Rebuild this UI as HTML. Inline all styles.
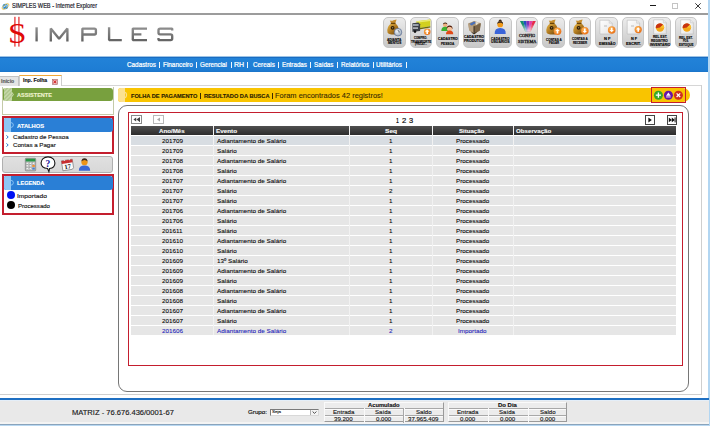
<!DOCTYPE html>
<html><head><meta charset="utf-8">
<style>
*{margin:0;padding:0;box-sizing:border-box}
html,body{width:710px;height:426px;overflow:hidden;background:#fff;font-family:"Liberation Sans",sans-serif;position:relative}
.a{position:absolute}
.t{position:absolute;white-space:nowrap;line-height:1}
.btn{position:absolute;top:17px;width:22.5px;height:30.6px;border-radius:5px;border:1px solid #c6c6c6;background:linear-gradient(#ececec,#dadada 50%,#c8c8c8)}
svg{position:absolute;overflow:visible}
</style></head><body>


<svg style="left:1px;top:1.5px" width="9" height="9" viewBox="0 0 11 11">
 <circle cx="5.3" cy="5.6" r="3.4" fill="#2b8ad6"/>
 <path d="M2.6 6.4 Q5.3 3.6 8.6 5" stroke="#d8ecfa" stroke-width="1.1" fill="none"/>
 <ellipse cx="5.5" cy="5.5" rx="5" ry="2.2" transform="rotate(-38 5.5 5.5)" fill="none" stroke="#e8c040" stroke-width="0.9"/>
</svg>

<div class="t" style="left:11.75px;top:2.87px;font-size:7.12px;font-weight:normal;color:#1b1b2b;font-family:'Liberation Sans',sans-serif;transform:scaleX(0.788);transform-origin:0 0;-webkit-text-stroke:0.2px #1b1b2b;">SIMPLES WEB - Internet Explorer</div>

<div class="a" style="left:650px;top:5px;width:6px;height:1px;background:#1a1a1a"></div>
<div class="a" style="left:672px;top:3px;width:6px;height:6px;border:1px solid #c4c4c4"></div>
<svg style="left:695px;top:3px" width="6" height="6" viewBox="0 0 6 6"><path d="M0.3 0.3L5.7 5.7M5.7 0.3L0.3 5.7" stroke="#222" stroke-width="0.9"/></svg>
<div class="a" style="left:0;top:13px;width:708px;height:2px;background:#9c9c9c"></div>
<div class="a" style="left:708px;top:0;width:2px;height:426px;background:#b2d6f2"></div>


<svg style="left:0;top:14px" width="180" height="40" viewBox="0 14 180 40">
 <defs><linearGradient id="lg" gradientUnits="userSpaceOnUse" x1="0" y1="27" x2="0" y2="42"><stop offset="0" stop-color="#909090"/><stop offset="1" stop-color="#606060"/></linearGradient></defs>
 <g fill="none" stroke="url(#lg)" stroke-width="2.35" stroke-miterlimit="1.3">
  <path d="M36.6 27.3V41.4"/>
  <path d="M50.8 41.4V28.6L59.1 38.8L67.4 28.6V41.4"/>
  <path d="M82.4 41.4V28.6H94.4Q95.9 28.6 95.9 30.1V33Q95.9 34.5 94.4 34.5H82.4"/>
  <path d="M109.1 27.3V40.1H121.8"/>
  <path d="M147 28.6H132.8V40.1H147M132.8 34.3H141.4"/>
  <path d="M172.2 30.6V28.6H160.1Q158.5 28.6 158.5 30.2V32.7Q158.5 34.3 160.1 34.3H170.6Q172.2 34.3 172.2 35.9V38.5Q172.2 40.1 170.6 40.1H158.5V38"/>
 </g>
 <g fill="#e8484a">
  <rect x="14.2" y="16.8" width="1.4" height="29.8"/>
  <rect x="18.2" y="16.8" width="1.4" height="29.8"/>
 </g>
</svg>

<div class="t" style="left:7.84px;top:17.63px;font-size:30.29px;font-weight:normal;color:#e00808;font-family:'Liberation Serif',serif;transform:scaleX(1.098);transform-origin:0 0;">S</div>
<div class="btn" style="left:383.0px"></div>
<svg style="left:383.0px;top:17px" width="23" height="31" viewBox="0 0 23 31"><defs>
<linearGradient id="gbag" x1="0" y1="0" x2="1" y2="1"><stop offset="0" stop-color="#e8b848"/><stop offset="0.5" stop-color="#b07a20"/><stop offset="1" stop-color="#60400c"/></linearGradient>
<radialGradient id="gor" cx="0.4" cy="0.35" r="0.7"><stop offset="0" stop-color="#ffc060"/><stop offset="1" stop-color="#e86a10"/></radialGradient>
<radialGradient id="gsil" cx="0.4" cy="0.35" r="0.7"><stop offset="0" stop-color="#f4f8fc"/><stop offset="1" stop-color="#98a8b8"/></radialGradient>
<linearGradient id="gfan" x1="0" y1="0" x2="0" y2="1"><stop offset="0.3" stop-color="#fff" stop-opacity="0"/><stop offset="1" stop-color="#fff" stop-opacity="0.7"/></linearGradient>
<linearGradient id="gdoc" x1="0" y1="0" x2="1" y2="1"><stop offset="0" stop-color="#ffffff"/><stop offset="1" stop-color="#e4e4e4"/></linearGradient>
</defs><g transform="translate(0 0)"><path d="M8.2 6.3 Q3.2 9.8 4.6 15.6 Q5.6 17.6 10.2 17.6 Q14.8 17.6 15.6 15.4 Q16.6 9.6 12.2 6.3 Z" fill="url(#gbag)"/><path d="M8.2 6.6 L6.8 3.4 Q9 4.4 10.4 3.2 L13.6 2.6 L12.2 6.6Z" fill="#c89030"/><rect x="7.8" y="5.8" width="4.6" height="1.2" fill="#6a4408"/><circle cx="9.6" cy="10.8" r="1.9" fill="#2a1a08"/><circle cx="9.6" cy="10.8" r="0.8" fill="#a08040"/></g><circle cx="15" cy="15.2" r="3.8" fill="url(#gsil)" stroke="#5a6c90" stroke-width="0.7"/><path d="M14.6 13.3 Q16.6 13.6 16.2 15.6" stroke="#345" stroke-width="0.7" fill="none"/></svg>
<div class="t" style="left:387.42px;top:38.64px;font-size:3.49px;font-weight:bold;color:#000;font-family:'Liberation Sans',sans-serif;transform:scaleX(0.936);transform-origin:0 0;-webkit-text-stroke:0.12px #000;">ADIANTA</div>
<div class="t" style="left:387.70px;top:41.94px;font-size:3.49px;font-weight:bold;color:#000;font-family:'Liberation Sans',sans-serif;transform:scaleX(0.902);transform-origin:0 0;-webkit-text-stroke:0.12px #000;">MENTOS</div>
<div class="btn" style="left:409.5px"></div>
<svg style="left:409.5px;top:17px" width="23" height="31" viewBox="0 0 23 31"><path d="M6.5 4.2 L20.3 2.5 V9.2 L6.5 11.6Z" fill="#d2d020"/><path d="M6.5 4.2 L20.3 2.5 L20.3 4 L6.5 5.8Z" fill="#eaea70"/><path d="M6.5 11.6 L20.3 9.2 V10.6 L6.5 13Z" fill="#6a6a10"/><path d="M2.4 6.2 L8.5 5.6 L10.1 7.2 V14 L2.4 14.8Z" fill="#3c4048"/><path d="M3 7 H8.6 V9 H3Z" fill="#9aa2ac"/><rect x="3" y="10.4" width="5" height="1.4" fill="#c8ccd2"/><circle cx="5" cy="14.6" r="1.3" fill="#111"/><circle cx="17.2" cy="14.8" r="3.3" fill="url(#gor)"/><path d="M17.2 12.5 L19.4 14.700000000000001 H18.0 V17.0 H16.4 V14.700000000000001 H15.0Z" fill="#fff"/></svg>
<div class="t" style="left:413.79px;top:37.24px;font-size:3.49px;font-weight:bold;color:#000;font-family:'Liberation Sans',sans-serif;transform:scaleX(0.785);transform-origin:0 0;-webkit-text-stroke:0.12px #000;">COMPRO.</div>
<div class="t" style="left:410.87px;top:40.54px;font-size:3.49px;font-weight:bold;color:#000;font-family:'Liberation Sans',sans-serif;transform:scaleX(0.842);transform-origin:0 0;-webkit-text-stroke:0.12px #000;">TRANSPORTE</div>
<div class="t" style="left:414.88px;top:43.44px;font-size:3.49px;font-weight:bold;color:#000;font-family:'Liberation Sans',sans-serif;transform:scaleX(0.678);transform-origin:0 0;-webkit-text-stroke:0.12px #000;">(PROJET...</div>
<div class="btn" style="left:436.0px"></div>
<svg style="left:436.0px;top:17px" width="23" height="31" viewBox="0 0 23 31"><circle cx="9.2" cy="7.9" r="2.2" fill="#f0b080"/><path d="M6.9 7.6 Q7 5.4 9.2 5.4 Q11.4 5.4 11.5 7.4 Q10.4 6.4 9.2 6.5 Q8 6.5 6.9 7.6Z" fill="#3a2010"/><path d="M5.3 14 Q5.3 9.8 9.2 9.8 Q13 9.8 13 14Z" fill="#3cb030"/><circle cx="13.6" cy="11.4" r="2.7" fill="#f4c098"/><path d="M10.7 12.2 Q10.4 8.4 13.6 8.4 Q16.8 8.4 16.5 12.2 Q15.8 9.8 13.6 9.8 Q11.4 9.8 10.7 12.2Z" fill="#4a1a0a"/><path d="M10 17.2 Q10 13.6 13.6 13.6 Q17.2 13.6 17.2 17.2Z" fill="#e04a18"/></svg>
<div class="t" style="left:438.06px;top:37.84px;font-size:3.49px;font-weight:bold;color:#000;font-family:'Liberation Sans',sans-serif;transform:scaleX(1.005);transform-origin:0 0;-webkit-text-stroke:0.12px #000;">CADASTRO</div>
<div class="t" style="left:441.29px;top:42.64px;font-size:3.49px;font-weight:bold;color:#000;font-family:'Liberation Sans',sans-serif;transform:scaleX(0.914);transform-origin:0 0;-webkit-text-stroke:0.12px #000;">PESSOA</div>
<div class="btn" style="left:462.5px"></div>
<svg style="left:462.5px;top:17px" width="23" height="31" viewBox="0 0 23 31"><path d="M5.2 6.4 L11.2 4 L17.8 6.2 L16.8 13.4 L11 17 L6.2 13.2Z" fill="#a8906c"/><path d="M11 9.2 L17.8 6.2 L16.8 13.4 L11 17Z" fill="#7a6448"/><path d="M5.2 6.4 L11 9.2 V17 L6.2 13.2Z" fill="#b8a080"/><path d="M6.5 7 L11 4.6 L13.5 5.8 L8.6 8.6Z" fill="#4a70b8"/><path d="M12.5 5 L16.5 5.4 L12.8 8.4Z" fill="#e8e0d0"/><path d="M11 9.2 L11 17" stroke="#2a2418" stroke-width="0.9"/><path d="M8.5 15.2 L11 17 L13.5 15.2" stroke="#2a2418" stroke-width="0.8" fill="none"/></svg>
<div class="t" style="left:463.86px;top:35.64px;font-size:3.49px;font-weight:bold;color:#000;font-family:'Liberation Sans',sans-serif;transform:scaleX(1.010);transform-origin:0 0;-webkit-text-stroke:0.12px #000;">CADASTRO</div>
<div class="t" style="left:463.77px;top:40.44px;font-size:3.49px;font-weight:bold;color:#000;font-family:'Liberation Sans',sans-serif;transform:scaleX(1.018);transform-origin:0 0;-webkit-text-stroke:0.12px #000;">PRODUTOS</div>
<div class="btn" style="left:489.0px"></div>
<svg style="left:489.0px;top:17px" width="23" height="31" viewBox="0 0 23 31"><circle cx="11.2" cy="4.2" r="1.6" fill="#3a2a20"/><circle cx="11.2" cy="7.4" r="2.9" fill="#f09a1a"/><path d="M8.3 7 Q8.2 4.6 11.2 4.6 Q14.2 4.6 14.1 7 Q13 5.8 11.2 5.8 Q9.4 5.8 8.3 7Z" fill="#3a2a20"/><path d="M5.7 17 Q5.2 11 11.2 11 Q17.2 11 16.7 17Z" fill="#3a64d8"/></svg>
<div class="t" style="left:491.47px;top:37.84px;font-size:3.49px;font-weight:bold;color:#000;font-family:'Liberation Sans',sans-serif;transform:scaleX(0.933);transform-origin:0 0;-webkit-text-stroke:0.12px #000;">CADASTRO</div>
<div class="t" style="left:491.39px;top:41.34px;font-size:3.49px;font-weight:bold;color:#000;font-family:'Liberation Sans',sans-serif;transform:scaleX(1.006);transform-origin:0 0;-webkit-text-stroke:0.12px #000;">USUARIOS</div>
<div class="btn" style="left:515.5px"></div>
<svg style="left:515.5px;top:17px" width="23" height="31" viewBox="0 0 23 31"><path d="M4 4 L19.8 4 L14.7 14.2 L9.1 14.2Z" fill="#ccc"/><path d="M4 4 L7.2 4 L10.2 14.2 L9.1 14.2Z" fill="#10906a"/><path d="M7.2 4 L10.3 4 L11.3 14.2 L10.2 14.2Z" fill="#2050c0"/><path d="M10.3 4 L13.5 4 L12.4 14.2 L11.3 14.2Z" fill="#8030b8"/><path d="M13.5 4 L16.7 4 L13.6 14.2 L12.4 14.2Z" fill="#e040a8"/><path d="M16.7 4 L19.8 4 L14.7 14.2 L13.6 14.2Z" fill="#e82848"/><path d="M4 4 L19.8 4 L14.7 14.2 L9.1 14.2Z" fill="url(#gfan)"/></svg>
<div class="t" style="left:519.02px;top:34.11px;font-size:4.47px;font-weight:normal;color:#1a1a1a;font-family:'Liberation Serif',serif;transform:scaleX(0.981);transform-origin:0 0;-webkit-text-stroke:0.3px #1a1a1a;">CONFIG</div>
<div class="t" style="left:517.62px;top:39.91px;font-size:4.47px;font-weight:normal;color:#1a1a1a;font-family:'Liberation Serif',serif;transform:scaleX(0.968);transform-origin:0 0;-webkit-text-stroke:0.3px #1a1a1a;">SISTEMA</div>
<div class="btn" style="left:542.0px"></div>
<svg style="left:542.0px;top:17px" width="23" height="31" viewBox="0 0 23 31"><g transform="translate(0 0)"><path d="M8.2 6.3 Q3.2 9.8 4.6 15.6 Q5.6 17.6 10.2 17.6 Q14.8 17.6 15.6 15.4 Q16.6 9.6 12.2 6.3 Z" fill="url(#gbag)"/><path d="M8.2 6.6 L6.8 3.4 Q9 4.4 10.4 3.2 L13.6 2.6 L12.2 6.6Z" fill="#c89030"/><rect x="7.8" y="5.8" width="4.6" height="1.2" fill="#6a4408"/><circle cx="9.6" cy="10.8" r="1.9" fill="#2a1a08"/><circle cx="9.6" cy="10.8" r="0.8" fill="#a08040"/></g><circle cx="15.5" cy="14.2" r="3.8" fill="url(#gor)"/><path d="M15.5 11.899999999999999 L17.7 14.1 H16.3 V16.4 H14.7 V14.1 H13.3Z" fill="#fff"/></svg>
<div class="t" style="left:545.88px;top:38.64px;font-size:3.49px;font-weight:bold;color:#000;font-family:'Liberation Sans',sans-serif;transform:scaleX(0.886);transform-origin:0 0;-webkit-text-stroke:0.12px #000;">CONTAS A</div>
<div class="t" style="left:548.91px;top:41.84px;font-size:3.49px;font-weight:bold;color:#000;font-family:'Liberation Sans',sans-serif;transform:scaleX(0.822);transform-origin:0 0;-webkit-text-stroke:0.12px #000;">PAGAR</div>
<div class="btn" style="left:568.5px"></div>
<svg style="left:568.5px;top:17px" width="23" height="31" viewBox="0 0 23 31"><g transform="translate(0 0)"><path d="M8.2 6.3 Q3.2 9.8 4.6 15.6 Q5.6 17.6 10.2 17.6 Q14.8 17.6 15.6 15.4 Q16.6 9.6 12.2 6.3 Z" fill="url(#gbag)"/><path d="M8.2 6.6 L6.8 3.4 Q9 4.4 10.4 3.2 L13.6 2.6 L12.2 6.6Z" fill="#c89030"/><rect x="7.8" y="5.8" width="4.6" height="1.2" fill="#6a4408"/><circle cx="9.6" cy="10.8" r="1.9" fill="#2a1a08"/><circle cx="9.6" cy="10.8" r="0.8" fill="#a08040"/></g><circle cx="15.8" cy="13.8" r="3.8" fill="url(#gor)"/><path d="M15.8 16.1 L18.0 13.9 H16.6 V11.600000000000001 H15.0 V13.9 H13.600000000000001Z" fill="#fff"/></svg>
<div class="t" style="left:572.18px;top:37.84px;font-size:3.49px;font-weight:bold;color:#000;font-family:'Liberation Sans',sans-serif;transform:scaleX(0.886);transform-origin:0 0;-webkit-text-stroke:0.12px #000;">CONTAS A</div>
<div class="t" style="left:573.01px;top:41.84px;font-size:3.49px;font-weight:bold;color:#000;font-family:'Liberation Sans',sans-serif;transform:scaleX(0.823);transform-origin:0 0;-webkit-text-stroke:0.12px #000;">RECEBER</div>
<div class="btn" style="left:595.0px"></div>
<svg style="left:595.0px;top:17px" width="23" height="31" viewBox="0 0 23 31"><path d="M4.9 3.2 H14.2 L17.2 6.2 V17 H4.9Z" fill="url(#gdoc)" stroke="#b8b8b8" stroke-width="0.6"/><path d="M14.2 3.2 V6.2 H17.2" fill="#e8e8e8" stroke="#c0c0c0" stroke-width="0.5"/><path d="M9 9 H12" stroke="#999" stroke-width="0.6"/><circle cx="16.7" cy="13" r="3.8" fill="url(#gor)"/><path d="M16.7 15.3 L18.9 13.1 H17.5 V10.8 H15.899999999999999 V13.1 H14.5Z" fill="#fff"/></svg>
<div class="t" style="left:603.53px;top:37.84px;font-size:3.49px;font-weight:bold;color:#000;font-family:'Liberation Sans',sans-serif;transform:scaleX(1.176);transform-origin:0 0;-webkit-text-stroke:0.12px #000;">N F</div>
<div class="t" style="left:598.67px;top:42.64px;font-size:3.49px;font-weight:bold;color:#000;font-family:'Liberation Sans',sans-serif;transform:scaleX(1.024);transform-origin:0 0;-webkit-text-stroke:0.12px #000;">EMISSÃO</div>
<div class="btn" style="left:621.5px"></div>
<svg style="left:621.5px;top:17px" width="23" height="31" viewBox="0 0 23 31"><path d="M5.2 3.2 H14.600000000000001 L17.6 6.2 V17 H5.2Z" fill="url(#gdoc)" stroke="#b8b8b8" stroke-width="0.6"/><path d="M14.600000000000001 3.2 V6.2 H17.6" fill="#e8e8e8" stroke="#c0c0c0" stroke-width="0.5"/><path d="M9 9 H12" stroke="#999" stroke-width="0.6"/><circle cx="16.2" cy="12.6" r="3.6" fill="url(#gor)"/><path d="M16.2 10.3 L18.4 12.5 H17.0 V14.8 H15.399999999999999 V12.5 H14.0Z" fill="#fff"/></svg>
<div class="t" style="left:630.75px;top:37.84px;font-size:3.49px;font-weight:bold;color:#000;font-family:'Liberation Sans',sans-serif;transform:scaleX(1.100);transform-origin:0 0;-webkit-text-stroke:0.12px #000;">N F</div>
<div class="t" style="left:626.25px;top:42.64px;font-size:3.49px;font-weight:bold;color:#000;font-family:'Liberation Sans',sans-serif;transform:scaleX(1.107);transform-origin:0 0;-webkit-text-stroke:0.12px #000;">ESCRIT.</div>
<div class="btn" style="left:648.0px"></div>
<svg style="left:648.0px;top:17px" width="23" height="31" viewBox="0 0 23 31"><path d="M5.7 2.8 H15.3 L18.3 5.8 V17 H5.7Z" fill="url(#gdoc)" stroke="#b8b8b8" stroke-width="0.6"/><path d="M15.3 2.8 V5.8 H18.3" fill="#e8e8e8" stroke="#c0c0c0" stroke-width="0.5"/><circle cx="12" cy="10.6" r="4.2" fill="#f4a818"/><path d="M12 10.6 L7.8 11.2 A4.2 4.2 0 0 1 15.15 7.827999999999999Z" fill="#c83410"/><path d="M12 10.6 L15.15 7.827999999999999 A4.2 4.2 0 0 1 16.2 10.9Z" fill="#f8c030"/></svg>
<div class="t" style="left:652.69px;top:36.04px;font-size:3.49px;font-weight:bold;color:#000;font-family:'Liberation Sans',sans-serif;transform:scaleX(0.932);transform-origin:0 0;-webkit-text-stroke:0.12px #000;">REL EST.</div>
<div class="t" style="left:651.39px;top:40.04px;font-size:3.49px;font-weight:bold;color:#000;font-family:'Liberation Sans',sans-serif;transform:scaleX(0.918);transform-origin:0 0;-webkit-text-stroke:0.12px #000;">REGISTRO</div>
<div class="t" style="left:649.59px;top:43.64px;font-size:3.49px;font-weight:bold;color:#000;font-family:'Liberation Sans',sans-serif;transform:scaleX(0.945);transform-origin:0 0;-webkit-text-stroke:0.12px #000;">INVENTÁRIO</div>
<div class="btn" style="left:674.5px"></div>
<svg style="left:674.5px;top:17px" width="23" height="31" viewBox="0 0 23 31"><path d="M5.7 2.8 H15.3 L18.3 5.8 V17 H5.7Z" fill="url(#gdoc)" stroke="#b8b8b8" stroke-width="0.6"/><path d="M15.3 2.8 V5.8 H18.3" fill="#e8e8e8" stroke="#c0c0c0" stroke-width="0.5"/><circle cx="11.9" cy="10.6" r="4.2" fill="#f4a818"/><path d="M11.9 10.6 L7.7 11.2 A4.2 4.2 0 0 1 15.05 7.827999999999999Z" fill="#c83410"/><path d="M11.9 10.6 L15.05 7.827999999999999 A4.2 4.2 0 0 1 16.1 10.9Z" fill="#f8c030"/></svg>
<div class="t" style="left:678.99px;top:36.94px;font-size:3.49px;font-weight:bold;color:#000;font-family:'Liberation Sans',sans-serif;transform:scaleX(0.905);transform-origin:0 0;-webkit-text-stroke:0.12px #000;">REL EST.</div>
<div class="t" style="left:683.04px;top:40.44px;font-size:3.49px;font-weight:bold;color:#000;font-family:'Liberation Sans',sans-serif;transform:scaleX(0.686);transform-origin:0 0;-webkit-text-stroke:0.12px #000;">POS.</div>
<div class="t" style="left:678.61px;top:44.04px;font-size:3.49px;font-weight:bold;color:#000;font-family:'Liberation Sans',sans-serif;transform:scaleX(0.853);transform-origin:0 0;-webkit-text-stroke:0.12px #000;">ESTOQUE</div>

<div class="a" style="left:0;top:56px;width:708px;height:1px;background:#9cc4e6"></div>
<div class="a" style="left:0;top:57px;width:708px;height:15px;background:linear-gradient(#1a6cc2 0,#1a6cc2 1px,#2282d8 1px,#1e7dd4 13px,#1a74c8 15px)"></div>

<div class="t" style="left:126.58px;top:62.32px;font-size:6.70px;font-weight:normal;color:#fff;font-family:'Liberation Sans',sans-serif;transform:scaleX(0.950);transform-origin:0 0;-webkit-text-stroke:0.22px #fff;">Cadastros</div>
<div class="a" style="left:159.0px;top:62.2px;width:0.9px;height:6px;background:#f0f6fc"></div>
<div class="t" style="left:163.49px;top:62.32px;font-size:6.70px;font-weight:normal;color:#fff;font-family:'Liberation Sans',sans-serif;transform:scaleX(0.954);transform-origin:0 0;-webkit-text-stroke:0.22px #fff;">Financeiro</div>
<div class="a" style="left:196.0px;top:62.2px;width:0.9px;height:6px;background:#f0f6fc"></div>
<div class="t" style="left:200.38px;top:62.32px;font-size:6.70px;font-weight:normal;color:#fff;font-family:'Liberation Sans',sans-serif;transform:scaleX(0.942);transform-origin:0 0;-webkit-text-stroke:0.22px #fff;">Gerencial</div>
<div class="a" style="left:231.3px;top:62.2px;width:0.9px;height:6px;background:#f0f6fc"></div>
<div class="t" style="left:234.24px;top:62.32px;font-size:6.70px;font-weight:normal;color:#fff;font-family:'Liberation Sans',sans-serif;transform:scaleX(1.049);transform-origin:0 0;-webkit-text-stroke:0.22px #fff;">RH</div>
<div class="a" style="left:247.1px;top:62.2px;width:0.9px;height:6px;background:#f0f6fc"></div>
<div class="t" style="left:252.68px;top:62.32px;font-size:6.70px;font-weight:normal;color:#fff;font-family:'Liberation Sans',sans-serif;transform:scaleX(0.946);transform-origin:0 0;-webkit-text-stroke:0.22px #fff;">Cereais</div>
<div class="a" style="left:277.8px;top:62.2px;width:0.9px;height:6px;background:#f0f6fc"></div>
<div class="t" style="left:281.70px;top:62.32px;font-size:6.70px;font-weight:normal;color:#fff;font-family:'Liberation Sans',sans-serif;transform:scaleX(0.932);transform-origin:0 0;-webkit-text-stroke:0.22px #fff;">Entradas</div>
<div class="a" style="left:310.3px;top:62.2px;width:0.9px;height:6px;background:#f0f6fc"></div>
<div class="t" style="left:313.62px;top:62.32px;font-size:6.70px;font-weight:normal;color:#fff;font-family:'Liberation Sans',sans-serif;transform:scaleX(0.934);transform-origin:0 0;-webkit-text-stroke:0.22px #fff;">Saídas</div>
<div class="a" style="left:337.4px;top:62.2px;width:0.9px;height:6px;background:#f0f6fc"></div>
<div class="t" style="left:340.80px;top:62.32px;font-size:6.70px;font-weight:normal;color:#fff;font-family:'Liberation Sans',sans-serif;transform:scaleX(0.935);transform-origin:0 0;-webkit-text-stroke:0.22px #fff;">Relatórios</div>
<div class="a" style="left:372.6px;top:62.2px;width:0.9px;height:6px;background:#f0f6fc"></div>
<div class="t" style="left:376.33px;top:62.32px;font-size:6.70px;font-weight:normal;color:#fff;font-family:'Liberation Sans',sans-serif;transform:scaleX(0.940);transform-origin:0 0;-webkit-text-stroke:0.22px #fff;">Utilitários</div>
<div class="a" style="left:406.4px;top:62.2px;width:0.9px;height:6px;background:#f0f6fc"></div>

<div class="a" style="left:0;top:85px;width:702px;height:1px;background:#d6d6d6"></div>
<div class="a" style="left:0;top:76px;width:19px;height:10px;background:#e4e4e4;border:1px solid #c2c2c2;border-left:none;border-bottom:none"></div>
<div class="a" style="left:19px;top:75px;width:43px;height:11px;background:#fff;border:1px solid #cdcdcd;border-bottom:none;border-top:1px solid #f0a838"></div>
<svg style="left:52.3px;top:78.6px" width="6" height="6" viewBox="0 0 6 6"><rect x="0.3" y="0.3" width="5.2" height="5.2" fill="#f4d4d4" stroke="#a06060" stroke-width="0.6"/><path d="M1.4 1.4L4.4 4.4M4.4 1.4L1.4 4.4" stroke="#d83838" stroke-width="1.1"/></svg>

<div class="t" style="left:1.47px;top:78.70px;font-size:5.31px;font-weight:bold;color:#5a5a5a;font-family:'Liberation Sans',sans-serif;transform:scaleX(0.948);transform-origin:0 0;-webkit-text-stroke:0.15px #5a5a5a;">Início</div>
<div class="t" style="left:22.67px;top:77.60px;font-size:5.31px;font-weight:bold;color:#111;font-family:'Liberation Sans',sans-serif;transform:scaleX(0.965);transform-origin:0 0;-webkit-text-stroke:0.15px #111;">Inp. Folha</div>
<div class="a" style="left:2px;top:87px;width:112px;height:28px;border:1px solid #c4caa8;border-top:none;background:#fff"></div>
<div class="a" style="left:3px;top:87.5px;width:110px;height:13px;background:#78a03e;border-radius:2px 3px 3px 2px"></div>
<div class="a" style="left:4px;top:88px;width:8px;height:12.5px;background:repeating-linear-gradient(135deg,#c4d6a6 0 1.5px,#b2c890 1.5px 3px)"></div>
<svg style="left:11px;top:88px" width="4" height="13" viewBox="0 0 4 13"><path d="M0.5 4 L2.3 6.5 L0.5 9" stroke="#c4d6a6" stroke-width="1.1" fill="none"/></svg>
<div class="t" style="left:16.76px;top:93.00px;font-size:5.31px;font-weight:bold;color:#f0f4d0;font-family:'Liberation Sans',sans-serif;transform:scaleX(1.052);transform-origin:0 0;-webkit-text-stroke:0.12px #f0f4d0;">ASSISTENTE</div>
<div class="a" style="left:2px;top:116px;width:112px;height:37.5px;border:2px solid #c41e2e;background:#fff"></div>
<div class="a" style="left:4px;top:118px;width:109px;height:14px;background:#2a7fd6;border-radius:2px 3px 3px 2px"></div><div class="a" style="left:4px;top:118px;width:7px;height:14px;background:#8ec6f4;border-radius:2px 0 0 2px"></div><svg style="left:10.3px;top:118px" width="4" height="14" viewBox="0 0 4 14"><path d="M0 4.4 Q3.4 4.4 3.4 7.0 Q3.4 9.6 0 9.6" stroke="#8ec6f4" stroke-width="0.9" fill="none"/></svg><div class="t" style="left:16.85px;top:124.12px;font-size:5.17px;font-weight:bold;color:#fff;font-family:'Liberation Sans',sans-serif;transform:scaleX(1.126);transform-origin:0 0;-webkit-text-stroke:0.12px #fff;">ATALHOS</div>
<svg style="left:6px;top:135.4px" width="3" height="4" viewBox="0 0 3 4"><path d="M0.4 0.4 L2.2 2 L0.4 3.6" stroke="#1f6fc8" stroke-width="0.9" fill="none"/></svg>
<div class="t" style="left:13.49px;top:134.97px;font-size:5.59px;font-weight:normal;color:#1a1a1a;font-family:'Liberation Sans',sans-serif;transform:scaleX(1.099);transform-origin:0 0;-webkit-text-stroke:0.15px #1a1a1a;">Cadastro de Pessoa</div>
<svg style="left:6px;top:143.3px" width="3" height="4" viewBox="0 0 3 4"><path d="M0.4 0.4 L2.2 2 L0.4 3.6" stroke="#1f6fc8" stroke-width="0.9" fill="none"/></svg>
<div class="t" style="left:13.49px;top:142.87px;font-size:5.59px;font-weight:normal;color:#1a1a1a;font-family:'Liberation Sans',sans-serif;transform:scaleX(1.103);transform-origin:0 0;-webkit-text-stroke:0.15px #1a1a1a;">Contas a Pagar</div>
<div class="a" style="left:2px;top:156px;width:111px;height:16.5px;background:linear-gradient(#e0e0e0,#d8d8d8);border:1px solid #b0b0b0;border-radius:3px"></div>
<svg style="left:25px;top:157.5px" width="11" height="13" viewBox="0 0 11 13">
 <rect x="0.3" y="0.3" width="10.4" height="12.6" rx="0.8" fill="#bfc4c4" stroke="#707070" stroke-width="0.6"/>
 <rect x="0.7" y="0.7" width="9.6" height="2.8" fill="#2a9648"/>
 <g fill="#f2f2f2" stroke="#8a8a8a" stroke-width="0.35"><rect x="1.1" y="4.2" width="2.5" height="2"/><rect x="4.2" y="4.2" width="2.5" height="2"/><rect x="1.1" y="6.9" width="2.5" height="2"/><rect x="4.2" y="6.9" width="2.5" height="2"/><rect x="1.1" y="9.6" width="2.5" height="2"/><rect x="4.2" y="9.6" width="2.5" height="2"/><rect x="7.3" y="4.2" width="2.5" height="2"/></g>
 <rect x="7.3" y="6.9" width="2.5" height="2" fill="#f09030"/><rect x="7.3" y="9.6" width="2.5" height="2" fill="#4a80d0"/>
</svg>
<svg style="left:40px;top:156px" width="16" height="16" viewBox="0 0 16 16">
 <path d="M8 0.9 C12 0.9 14.9 3.4 14.9 6.9 C14.9 10 12.6 12.1 9.6 12.5 L8.9 15.6 L7.6 12.5 C3.6 12.2 1.1 10 1.1 6.9 C1.1 3.4 4 0.9 8 0.9Z" fill="#fff" stroke="#151515" stroke-width="1.1"/>
 <text x="7.9" y="10.6" text-anchor="middle" font-family="Liberation Serif" font-weight="bold" font-size="9.5" fill="#10109a">?</text>
</svg>
<svg style="left:60.5px;top:158px" width="13" height="13" viewBox="0 0 13 13">
 <g transform="rotate(-9 6.5 6.5)">
 <path d="M1 2 H12 V10.5 L10.5 12 H1Z" fill="#fafafa" stroke="#6a6a6a" stroke-width="0.6"/>
 <rect x="1" y="2" width="11" height="3" fill="#c83030"/>
 <circle cx="4" cy="2" r="0.6" fill="#eee"/><circle cx="9" cy="2" r="0.6" fill="#eee"/>
 <text x="6.4" y="10.8" text-anchor="middle" font-family="Liberation Serif" font-weight="bold" font-size="6.5" fill="#111">17</text>
 </g>
</svg>
<svg style="left:77.5px;top:157px" width="13" height="14" viewBox="0 0 13 14">
 <circle cx="6.5" cy="5.2" r="3.1" fill="#ee9418"/>
 <path d="M3.4 4.6 Q3.6 1.2 6.5 1.2 Q9.4 1.2 9.6 4.6 Q8.5 3 6.5 3 Q4.5 3 3.4 4.6Z" fill="#3c2a1c"/>
 <path d="M0.8 13.8 Q0.8 8.6 6.5 8.6 Q12.2 8.6 12.2 13.8Z" fill="#3a68d6"/>
</svg>

<div class="a" style="left:2px;top:174.3px;width:112px;height:41px;border:2px solid #c41e2e;background:#fff"></div>
<div class="a" style="left:4px;top:176px;width:109px;height:13.5px;background:#2a7fd6;border-radius:2px 3px 3px 2px"></div><div class="a" style="left:4px;top:176px;width:7px;height:13.5px;background:#8ec6f4;border-radius:2px 0 0 2px"></div><svg style="left:10.3px;top:176px" width="4" height="13.5" viewBox="0 0 4 13.5"><path d="M0 4.15 Q3.4 4.15 3.4 6.75 Q3.4 9.35 0 9.35" stroke="#8ec6f4" stroke-width="0.9" fill="none"/></svg><div class="t" style="left:16.54px;top:180.92px;font-size:5.17px;font-weight:bold;color:#fff;font-family:'Liberation Sans',sans-serif;transform:scaleX(1.082);transform-origin:0 0;-webkit-text-stroke:0.12px #fff;">LEGENDA</div>
<div class="a" style="left:6.6px;top:190.8px;width:8.6px;height:8.6px;border-radius:50%;background:#0010f4"></div>
<div class="a" style="left:6.6px;top:200.6px;width:8.6px;height:8.6px;border-radius:50%;background:#000"></div>
<div class="t" style="left:17.40px;top:194.07px;font-size:5.59px;font-weight:normal;color:#1a1a1a;font-family:'Liberation Sans',sans-serif;transform:scaleX(1.188);transform-origin:0 0;-webkit-text-stroke:0.15px #1a1a1a;">Importado</div>
<div class="t" style="left:17.51px;top:203.97px;font-size:5.59px;font-weight:normal;color:#1a1a1a;font-family:'Liberation Sans',sans-serif;transform:scaleX(1.086);transform-origin:0 0;-webkit-text-stroke:0.15px #1a1a1a;">Processado</div>

<div class="a" style="left:701px;top:85px;width:1px;height:310px;background:#cfcfcf"></div>
<div class="a" style="left:0;top:394px;width:702px;height:1px;background:#cfcfcf"></div>
<div class="a" style="left:118px;top:88.2px;width:572px;height:13.6px;background:#f9c400;border-radius:3px 7px 7px 3px"></div>
<div class="a" style="left:118px;top:88.2px;width:7px;height:13.6px;background:#fbe190;border-radius:3px 0 0 3px"></div>
<svg style="left:124.5px;top:88px" width="4" height="14" viewBox="0 0 4 14"><path d="M0.3 4.2 Q2.8 7 0.3 9.8" stroke="#fbe190" stroke-width="1.2" fill="none"/></svg>

<div class="t" style="left:130.83px;top:93.64px;font-size:5.03px;font-weight:bold;color:#2a2000;font-family:'Liberation Sans',sans-serif;transform:scaleX(1.125);transform-origin:0 0;-webkit-text-stroke:0.12px #2a2000;">FOLHA DE PAGAMENTO</div>
<div class="a" style="left:200.2px;top:93px;width:0.8px;height:6px;background:#3a2a00"></div>
<div class="t" style="left:203.53px;top:93.64px;font-size:5.03px;font-weight:bold;color:#2a2000;font-family:'Liberation Sans',sans-serif;transform:scaleX(1.126);transform-origin:0 0;-webkit-text-stroke:0.12px #2a2000;">RESULTADO DA BUSCA</div>
<div class="a" style="left:272.2px;top:93px;width:0.8px;height:6px;background:#3a2a00"></div>
<div class="t" style="left:274.80px;top:93.14px;font-size:6.56px;font-weight:normal;color:#3a2c00;font-family:'Liberation Sans',sans-serif;transform:scaleX(1.140);transform-origin:0 0;-webkit-text-stroke:0.1px #3a2c00;">Foram encontrados 42 registros!</div>

<div class="a" style="left:650.7px;top:87.1px;width:35.2px;height:15.7px;border:1.9px solid #c41e2e"></div>
<svg style="left:653px;top:90px" width="31" height="11" viewBox="653 90 31 11">
 <circle cx="658.4" cy="95.2" r="4.5" fill="#38a828"/><path d="M658.4 92.6V97.8M655.8 95.2H661" stroke="#fff" stroke-width="1.3"/>
 <circle cx="668.4" cy="95.2" r="4.5" fill="#6a14a4"/><path d="M668.4 92.6L670.7 95.8H666.1Z" fill="#fff"/><rect x="666.1" y="96.5" width="4.6" height="0.9" fill="#fff"/>
 <circle cx="678.4" cy="95.2" r="4.5" fill="#d03020"/><path d="M676.6 93.4L680.2 97M680.2 93.4L676.6 97" stroke="#fff" stroke-width="1.2"/>
</svg>
<div class="a" style="left:118px;top:105px;width:571px;height:287px;border:1px solid #767676;border-radius:9px"></div>
<div class="a" style="left:128px;top:112.3px;width:555px;height:254px;border:1.7px solid #c41e2e"></div>


<div class="a" style="left:131.1px;top:115.1px;width:10.7px;height:9px;border:1px solid #8a8a8a;background:#fff"></div>
<svg style="left:131px;top:115px" width="11" height="10" viewBox="0 0 11 10"><path d="M2.4 4.6 L5.2 2.6 V6.6Z M5.4 4.6 L8.2 2.6 V6.6Z" fill="#444"/><rect x="8" y="2.4" width="1" height="4.4" fill="#444"/></svg>
<div class="a" style="left:153px;top:115.1px;width:10.8px;height:9px;border:1px solid #b8b8b8;background:#fff"></div>
<svg style="left:153px;top:115px" width="11" height="10" viewBox="0 0 11 10"><path d="M4 4.6 L7 2.6 V6.6Z" fill="#aaa"/></svg>
<div class="a" style="left:645.4px;top:115.1px;width:9.4px;height:9.7px;border:1px solid #444;background:#fff"></div>
<svg style="left:645px;top:115px" width="10" height="10" viewBox="0 0 10 10"><path d="M3.4 2.4 L6.8 4.9 L3.4 7.4Z" fill="#111"/></svg>
<div class="a" style="left:667px;top:115.1px;width:10px;height:9.7px;border:1px solid #444;background:#fff"></div>
<svg style="left:667px;top:115px" width="10" height="10" viewBox="0 0 10 10"><path d="M1.8 2.5 L4.8 4.9 L1.8 7.3Z M4.8 2.5 L7.8 4.9 L4.8 7.3Z" fill="#111"/><rect x="7.6" y="2.4" width="1" height="5" fill="#111"/></svg>

<div class="t" style="left:396.46px;top:118.04px;font-size:6.56px;font-weight:bold;color:#111;font-family:'Liberation Sans',sans-serif;transform:scaleX(0.786);transform-origin:0 0;">1</div>
<div class="t" style="left:401.92px;top:118.04px;font-size:6.56px;font-weight:normal;color:#111;font-family:'Liberation Sans',sans-serif;transform:scaleX(1.172);transform-origin:0 0;-webkit-text-stroke:0.2px #111;">2</div>
<div class="t" style="left:408.50px;top:118.04px;font-size:6.56px;font-weight:normal;color:#111;font-family:'Liberation Sans',sans-serif;transform:scaleX(1.134);transform-origin:0 0;-webkit-text-stroke:0.2px #111;">3</div>
<div class="a" style="left:131.3px;top:125.8px;width:544.7px;height:9.2px;background:linear-gradient(#505050,#2c2c2c)"></div>
<div class="t" style="left:159.05px;top:129.09px;font-size:5.45px;font-weight:bold;color:#fafafa;font-family:'Liberation Sans',sans-serif;transform:scaleX(1.133);transform-origin:0 0;-webkit-text-stroke:0.1px #fafafa;">Ano/Mês</div>
<div class="t" style="left:215.79px;top:129.09px;font-size:5.45px;font-weight:bold;color:#fafafa;font-family:'Liberation Sans',sans-serif;transform:scaleX(1.160);transform-origin:0 0;-webkit-text-stroke:0.1px #fafafa;">Evento</div>
<div class="t" style="left:384.50px;top:129.09px;font-size:5.45px;font-weight:bold;color:#fafafa;font-family:'Liberation Sans',sans-serif;transform:scaleX(1.213);transform-origin:0 0;-webkit-text-stroke:0.1px #fafafa;">Seq</div>
<div class="t" style="left:459.42px;top:129.09px;font-size:5.45px;font-weight:bold;color:#fafafa;font-family:'Liberation Sans',sans-serif;transform:scaleX(1.116);transform-origin:0 0;-webkit-text-stroke:0.1px #fafafa;">Situação</div>
<div class="t" style="left:516.35px;top:129.09px;font-size:5.45px;font-weight:bold;color:#fafafa;font-family:'Liberation Sans',sans-serif;transform:scaleX(1.132);transform-origin:0 0;-webkit-text-stroke:0.1px #fafafa;">Observação</div>
<div class="a" style="left:131.3px;top:135.8px;width:544.7px;height:9.2px;background:#d8dde2"></div>
<div class="t" style="left:161.63px;top:139.25px;font-size:5.73px;font-weight:normal;color:#000;font-family:'Liberation Sans',sans-serif;transform:scaleX(1.105);transform-origin:0 0;-webkit-text-stroke:0.07px #000;">201709</div>
<div class="t" style="left:217.27px;top:139.25px;font-size:5.73px;font-weight:normal;color:#000;font-family:'Liberation Sans',sans-serif;transform:scaleX(1.105);transform-origin:0 0;-webkit-text-stroke:0.07px #000;">Adiantamento de Salário</div>
<div class="t" style="left:389.15px;top:139.25px;font-size:5.73px;font-weight:normal;color:#000;font-family:'Liberation Sans',sans-serif;transform:scaleX(1.105);transform-origin:0 0;-webkit-text-stroke:0.07px #000;">1</div>
<div class="t" style="left:455.57px;top:139.25px;font-size:5.73px;font-weight:normal;color:#000;font-family:'Liberation Sans',sans-serif;transform:scaleX(1.105);transform-origin:0 0;-webkit-text-stroke:0.07px #000;">Processado</div>
<div class="a" style="left:131.3px;top:145.8px;width:544.7px;height:9.2px;background:#e6e6e6"></div>
<div class="t" style="left:161.63px;top:149.25px;font-size:5.73px;font-weight:normal;color:#000;font-family:'Liberation Sans',sans-serif;transform:scaleX(1.105);transform-origin:0 0;-webkit-text-stroke:0.07px #000;">201709</div>
<div class="t" style="left:217.02px;top:149.25px;font-size:5.73px;font-weight:normal;color:#000;font-family:'Liberation Sans',sans-serif;transform:scaleX(1.105);transform-origin:0 0;-webkit-text-stroke:0.07px #000;">Salário</div>
<div class="t" style="left:389.15px;top:149.25px;font-size:5.73px;font-weight:normal;color:#000;font-family:'Liberation Sans',sans-serif;transform:scaleX(1.105);transform-origin:0 0;-webkit-text-stroke:0.07px #000;">1</div>
<div class="t" style="left:455.57px;top:149.25px;font-size:5.73px;font-weight:normal;color:#000;font-family:'Liberation Sans',sans-serif;transform:scaleX(1.105);transform-origin:0 0;-webkit-text-stroke:0.07px #000;">Processado</div>
<div class="a" style="left:131.3px;top:155.8px;width:544.7px;height:9.2px;background:#e6e6e6"></div>
<div class="t" style="left:161.62px;top:159.25px;font-size:5.73px;font-weight:normal;color:#000;font-family:'Liberation Sans',sans-serif;transform:scaleX(1.105);transform-origin:0 0;-webkit-text-stroke:0.07px #000;">201708</div>
<div class="t" style="left:217.27px;top:159.25px;font-size:5.73px;font-weight:normal;color:#000;font-family:'Liberation Sans',sans-serif;transform:scaleX(1.105);transform-origin:0 0;-webkit-text-stroke:0.07px #000;">Adiantamento de Salário</div>
<div class="t" style="left:389.15px;top:159.25px;font-size:5.73px;font-weight:normal;color:#000;font-family:'Liberation Sans',sans-serif;transform:scaleX(1.105);transform-origin:0 0;-webkit-text-stroke:0.07px #000;">1</div>
<div class="t" style="left:455.57px;top:159.25px;font-size:5.73px;font-weight:normal;color:#000;font-family:'Liberation Sans',sans-serif;transform:scaleX(1.105);transform-origin:0 0;-webkit-text-stroke:0.07px #000;">Processado</div>
<div class="a" style="left:131.3px;top:165.8px;width:544.7px;height:9.2px;background:#e6e6e6"></div>
<div class="t" style="left:161.62px;top:169.25px;font-size:5.73px;font-weight:normal;color:#000;font-family:'Liberation Sans',sans-serif;transform:scaleX(1.105);transform-origin:0 0;-webkit-text-stroke:0.07px #000;">201708</div>
<div class="t" style="left:217.02px;top:169.25px;font-size:5.73px;font-weight:normal;color:#000;font-family:'Liberation Sans',sans-serif;transform:scaleX(1.105);transform-origin:0 0;-webkit-text-stroke:0.07px #000;">Salário</div>
<div class="t" style="left:389.15px;top:169.25px;font-size:5.73px;font-weight:normal;color:#000;font-family:'Liberation Sans',sans-serif;transform:scaleX(1.105);transform-origin:0 0;-webkit-text-stroke:0.07px #000;">1</div>
<div class="t" style="left:455.57px;top:169.25px;font-size:5.73px;font-weight:normal;color:#000;font-family:'Liberation Sans',sans-serif;transform:scaleX(1.105);transform-origin:0 0;-webkit-text-stroke:0.07px #000;">Processado</div>
<div class="a" style="left:131.3px;top:175.8px;width:544.7px;height:9.2px;background:#e6e6e6"></div>
<div class="t" style="left:161.65px;top:179.25px;font-size:5.73px;font-weight:normal;color:#000;font-family:'Liberation Sans',sans-serif;transform:scaleX(1.105);transform-origin:0 0;-webkit-text-stroke:0.07px #000;">201707</div>
<div class="t" style="left:217.27px;top:179.25px;font-size:5.73px;font-weight:normal;color:#000;font-family:'Liberation Sans',sans-serif;transform:scaleX(1.105);transform-origin:0 0;-webkit-text-stroke:0.07px #000;">Adiantamento de Salário</div>
<div class="t" style="left:389.15px;top:179.25px;font-size:5.73px;font-weight:normal;color:#000;font-family:'Liberation Sans',sans-serif;transform:scaleX(1.105);transform-origin:0 0;-webkit-text-stroke:0.07px #000;">1</div>
<div class="t" style="left:455.57px;top:179.25px;font-size:5.73px;font-weight:normal;color:#000;font-family:'Liberation Sans',sans-serif;transform:scaleX(1.105);transform-origin:0 0;-webkit-text-stroke:0.07px #000;">Processado</div>
<div class="a" style="left:131.3px;top:185.8px;width:544.7px;height:9.2px;background:#e6e6e6"></div>
<div class="t" style="left:161.65px;top:189.25px;font-size:5.73px;font-weight:normal;color:#000;font-family:'Liberation Sans',sans-serif;transform:scaleX(1.105);transform-origin:0 0;-webkit-text-stroke:0.07px #000;">201707</div>
<div class="t" style="left:217.02px;top:189.25px;font-size:5.73px;font-weight:normal;color:#000;font-family:'Liberation Sans',sans-serif;transform:scaleX(1.105);transform-origin:0 0;-webkit-text-stroke:0.07px #000;">Salário</div>
<div class="t" style="left:389.24px;top:189.25px;font-size:5.73px;font-weight:normal;color:#000;font-family:'Liberation Sans',sans-serif;transform:scaleX(1.105);transform-origin:0 0;-webkit-text-stroke:0.07px #000;">2</div>
<div class="t" style="left:455.57px;top:189.25px;font-size:5.73px;font-weight:normal;color:#000;font-family:'Liberation Sans',sans-serif;transform:scaleX(1.105);transform-origin:0 0;-webkit-text-stroke:0.07px #000;">Processado</div>
<div class="a" style="left:131.3px;top:195.8px;width:544.7px;height:9.2px;background:#e6e6e6"></div>
<div class="t" style="left:161.65px;top:199.25px;font-size:5.73px;font-weight:normal;color:#000;font-family:'Liberation Sans',sans-serif;transform:scaleX(1.105);transform-origin:0 0;-webkit-text-stroke:0.07px #000;">201707</div>
<div class="t" style="left:217.02px;top:199.25px;font-size:5.73px;font-weight:normal;color:#000;font-family:'Liberation Sans',sans-serif;transform:scaleX(1.105);transform-origin:0 0;-webkit-text-stroke:0.07px #000;">Salário</div>
<div class="t" style="left:389.15px;top:199.25px;font-size:5.73px;font-weight:normal;color:#000;font-family:'Liberation Sans',sans-serif;transform:scaleX(1.105);transform-origin:0 0;-webkit-text-stroke:0.07px #000;">1</div>
<div class="t" style="left:455.57px;top:199.25px;font-size:5.73px;font-weight:normal;color:#000;font-family:'Liberation Sans',sans-serif;transform:scaleX(1.105);transform-origin:0 0;-webkit-text-stroke:0.07px #000;">Processado</div>
<div class="a" style="left:131.3px;top:205.8px;width:544.7px;height:9.2px;background:#e6e6e6"></div>
<div class="t" style="left:161.63px;top:209.25px;font-size:5.73px;font-weight:normal;color:#000;font-family:'Liberation Sans',sans-serif;transform:scaleX(1.105);transform-origin:0 0;-webkit-text-stroke:0.07px #000;">201706</div>
<div class="t" style="left:217.27px;top:209.25px;font-size:5.73px;font-weight:normal;color:#000;font-family:'Liberation Sans',sans-serif;transform:scaleX(1.105);transform-origin:0 0;-webkit-text-stroke:0.07px #000;">Adiantamento de Salário</div>
<div class="t" style="left:389.15px;top:209.25px;font-size:5.73px;font-weight:normal;color:#000;font-family:'Liberation Sans',sans-serif;transform:scaleX(1.105);transform-origin:0 0;-webkit-text-stroke:0.07px #000;">1</div>
<div class="t" style="left:455.57px;top:209.25px;font-size:5.73px;font-weight:normal;color:#000;font-family:'Liberation Sans',sans-serif;transform:scaleX(1.105);transform-origin:0 0;-webkit-text-stroke:0.07px #000;">Processado</div>
<div class="a" style="left:131.3px;top:215.8px;width:544.7px;height:9.2px;background:#e6e6e6"></div>
<div class="t" style="left:161.63px;top:219.25px;font-size:5.73px;font-weight:normal;color:#000;font-family:'Liberation Sans',sans-serif;transform:scaleX(1.105);transform-origin:0 0;-webkit-text-stroke:0.07px #000;">201706</div>
<div class="t" style="left:217.02px;top:219.25px;font-size:5.73px;font-weight:normal;color:#000;font-family:'Liberation Sans',sans-serif;transform:scaleX(1.105);transform-origin:0 0;-webkit-text-stroke:0.07px #000;">Salário</div>
<div class="t" style="left:389.15px;top:219.25px;font-size:5.73px;font-weight:normal;color:#000;font-family:'Liberation Sans',sans-serif;transform:scaleX(1.105);transform-origin:0 0;-webkit-text-stroke:0.07px #000;">1</div>
<div class="t" style="left:455.57px;top:219.25px;font-size:5.73px;font-weight:normal;color:#000;font-family:'Liberation Sans',sans-serif;transform:scaleX(1.105);transform-origin:0 0;-webkit-text-stroke:0.07px #000;">Processado</div>
<div class="a" style="left:131.3px;top:225.8px;width:544.7px;height:9.2px;background:#e6e6e6"></div>
<div class="t" style="left:161.87px;top:229.25px;font-size:5.73px;font-weight:normal;color:#000;font-family:'Liberation Sans',sans-serif;transform:scaleX(1.105);transform-origin:0 0;-webkit-text-stroke:0.07px #000;">201611</div>
<div class="t" style="left:217.02px;top:229.25px;font-size:5.73px;font-weight:normal;color:#000;font-family:'Liberation Sans',sans-serif;transform:scaleX(1.105);transform-origin:0 0;-webkit-text-stroke:0.07px #000;">Salário</div>
<div class="t" style="left:389.15px;top:229.25px;font-size:5.73px;font-weight:normal;color:#000;font-family:'Liberation Sans',sans-serif;transform:scaleX(1.105);transform-origin:0 0;-webkit-text-stroke:0.07px #000;">1</div>
<div class="t" style="left:455.57px;top:229.25px;font-size:5.73px;font-weight:normal;color:#000;font-family:'Liberation Sans',sans-serif;transform:scaleX(1.105);transform-origin:0 0;-webkit-text-stroke:0.07px #000;">Processado</div>
<div class="a" style="left:131.3px;top:235.8px;width:544.7px;height:9.2px;background:#e6e6e6"></div>
<div class="t" style="left:161.62px;top:239.25px;font-size:5.73px;font-weight:normal;color:#000;font-family:'Liberation Sans',sans-serif;transform:scaleX(1.105);transform-origin:0 0;-webkit-text-stroke:0.07px #000;">201610</div>
<div class="t" style="left:217.27px;top:239.25px;font-size:5.73px;font-weight:normal;color:#000;font-family:'Liberation Sans',sans-serif;transform:scaleX(1.105);transform-origin:0 0;-webkit-text-stroke:0.07px #000;">Adiantamento de Salário</div>
<div class="t" style="left:389.15px;top:239.25px;font-size:5.73px;font-weight:normal;color:#000;font-family:'Liberation Sans',sans-serif;transform:scaleX(1.105);transform-origin:0 0;-webkit-text-stroke:0.07px #000;">1</div>
<div class="t" style="left:455.57px;top:239.25px;font-size:5.73px;font-weight:normal;color:#000;font-family:'Liberation Sans',sans-serif;transform:scaleX(1.105);transform-origin:0 0;-webkit-text-stroke:0.07px #000;">Processado</div>
<div class="a" style="left:131.3px;top:245.8px;width:544.7px;height:9.2px;background:#e6e6e6"></div>
<div class="t" style="left:161.62px;top:249.25px;font-size:5.73px;font-weight:normal;color:#000;font-family:'Liberation Sans',sans-serif;transform:scaleX(1.105);transform-origin:0 0;-webkit-text-stroke:0.07px #000;">201610</div>
<div class="t" style="left:217.02px;top:249.25px;font-size:5.73px;font-weight:normal;color:#000;font-family:'Liberation Sans',sans-serif;transform:scaleX(1.105);transform-origin:0 0;-webkit-text-stroke:0.07px #000;">Salário</div>
<div class="t" style="left:389.15px;top:249.25px;font-size:5.73px;font-weight:normal;color:#000;font-family:'Liberation Sans',sans-serif;transform:scaleX(1.105);transform-origin:0 0;-webkit-text-stroke:0.07px #000;">1</div>
<div class="t" style="left:455.57px;top:249.25px;font-size:5.73px;font-weight:normal;color:#000;font-family:'Liberation Sans',sans-serif;transform:scaleX(1.105);transform-origin:0 0;-webkit-text-stroke:0.07px #000;">Processado</div>
<div class="a" style="left:131.3px;top:255.8px;width:544.7px;height:9.2px;background:#e6e6e6"></div>
<div class="t" style="left:161.63px;top:259.25px;font-size:5.73px;font-weight:normal;color:#000;font-family:'Liberation Sans',sans-serif;transform:scaleX(1.105);transform-origin:0 0;-webkit-text-stroke:0.07px #000;">201609</div>
<div class="t" style="left:216.83px;top:259.25px;font-size:5.73px;font-weight:normal;color:#000;font-family:'Liberation Sans',sans-serif;transform:scaleX(1.105);transform-origin:0 0;-webkit-text-stroke:0.07px #000;">13º Salário</div>
<div class="t" style="left:389.15px;top:259.25px;font-size:5.73px;font-weight:normal;color:#000;font-family:'Liberation Sans',sans-serif;transform:scaleX(1.105);transform-origin:0 0;-webkit-text-stroke:0.07px #000;">1</div>
<div class="t" style="left:455.57px;top:259.25px;font-size:5.73px;font-weight:normal;color:#000;font-family:'Liberation Sans',sans-serif;transform:scaleX(1.105);transform-origin:0 0;-webkit-text-stroke:0.07px #000;">Processado</div>
<div class="a" style="left:131.3px;top:265.8px;width:544.7px;height:9.2px;background:#e6e6e6"></div>
<div class="t" style="left:161.63px;top:269.25px;font-size:5.73px;font-weight:normal;color:#000;font-family:'Liberation Sans',sans-serif;transform:scaleX(1.105);transform-origin:0 0;-webkit-text-stroke:0.07px #000;">201609</div>
<div class="t" style="left:217.27px;top:269.25px;font-size:5.73px;font-weight:normal;color:#000;font-family:'Liberation Sans',sans-serif;transform:scaleX(1.105);transform-origin:0 0;-webkit-text-stroke:0.07px #000;">Adiantamento de Salário</div>
<div class="t" style="left:389.15px;top:269.25px;font-size:5.73px;font-weight:normal;color:#000;font-family:'Liberation Sans',sans-serif;transform:scaleX(1.105);transform-origin:0 0;-webkit-text-stroke:0.07px #000;">1</div>
<div class="t" style="left:455.57px;top:269.25px;font-size:5.73px;font-weight:normal;color:#000;font-family:'Liberation Sans',sans-serif;transform:scaleX(1.105);transform-origin:0 0;-webkit-text-stroke:0.07px #000;">Processado</div>
<div class="a" style="left:131.3px;top:275.8px;width:544.7px;height:9.2px;background:#e6e6e6"></div>
<div class="t" style="left:161.63px;top:279.25px;font-size:5.73px;font-weight:normal;color:#000;font-family:'Liberation Sans',sans-serif;transform:scaleX(1.105);transform-origin:0 0;-webkit-text-stroke:0.07px #000;">201609</div>
<div class="t" style="left:217.02px;top:279.25px;font-size:5.73px;font-weight:normal;color:#000;font-family:'Liberation Sans',sans-serif;transform:scaleX(1.105);transform-origin:0 0;-webkit-text-stroke:0.07px #000;">Salário</div>
<div class="t" style="left:389.15px;top:279.25px;font-size:5.73px;font-weight:normal;color:#000;font-family:'Liberation Sans',sans-serif;transform:scaleX(1.105);transform-origin:0 0;-webkit-text-stroke:0.07px #000;">1</div>
<div class="t" style="left:455.57px;top:279.25px;font-size:5.73px;font-weight:normal;color:#000;font-family:'Liberation Sans',sans-serif;transform:scaleX(1.105);transform-origin:0 0;-webkit-text-stroke:0.07px #000;">Processado</div>
<div class="a" style="left:131.3px;top:285.8px;width:544.7px;height:9.2px;background:#e6e6e6"></div>
<div class="t" style="left:161.62px;top:289.25px;font-size:5.73px;font-weight:normal;color:#000;font-family:'Liberation Sans',sans-serif;transform:scaleX(1.105);transform-origin:0 0;-webkit-text-stroke:0.07px #000;">201608</div>
<div class="t" style="left:217.27px;top:289.25px;font-size:5.73px;font-weight:normal;color:#000;font-family:'Liberation Sans',sans-serif;transform:scaleX(1.105);transform-origin:0 0;-webkit-text-stroke:0.07px #000;">Adiantamento de Salário</div>
<div class="t" style="left:389.15px;top:289.25px;font-size:5.73px;font-weight:normal;color:#000;font-family:'Liberation Sans',sans-serif;transform:scaleX(1.105);transform-origin:0 0;-webkit-text-stroke:0.07px #000;">1</div>
<div class="t" style="left:455.57px;top:289.25px;font-size:5.73px;font-weight:normal;color:#000;font-family:'Liberation Sans',sans-serif;transform:scaleX(1.105);transform-origin:0 0;-webkit-text-stroke:0.07px #000;">Processado</div>
<div class="a" style="left:131.3px;top:295.8px;width:544.7px;height:9.2px;background:#e6e6e6"></div>
<div class="t" style="left:161.62px;top:299.25px;font-size:5.73px;font-weight:normal;color:#000;font-family:'Liberation Sans',sans-serif;transform:scaleX(1.105);transform-origin:0 0;-webkit-text-stroke:0.07px #000;">201608</div>
<div class="t" style="left:217.02px;top:299.25px;font-size:5.73px;font-weight:normal;color:#000;font-family:'Liberation Sans',sans-serif;transform:scaleX(1.105);transform-origin:0 0;-webkit-text-stroke:0.07px #000;">Salário</div>
<div class="t" style="left:389.15px;top:299.25px;font-size:5.73px;font-weight:normal;color:#000;font-family:'Liberation Sans',sans-serif;transform:scaleX(1.105);transform-origin:0 0;-webkit-text-stroke:0.07px #000;">1</div>
<div class="t" style="left:455.57px;top:299.25px;font-size:5.73px;font-weight:normal;color:#000;font-family:'Liberation Sans',sans-serif;transform:scaleX(1.105);transform-origin:0 0;-webkit-text-stroke:0.07px #000;">Processado</div>
<div class="a" style="left:131.3px;top:305.8px;width:544.7px;height:9.2px;background:#e6e6e6"></div>
<div class="t" style="left:161.65px;top:309.25px;font-size:5.73px;font-weight:normal;color:#000;font-family:'Liberation Sans',sans-serif;transform:scaleX(1.105);transform-origin:0 0;-webkit-text-stroke:0.07px #000;">201607</div>
<div class="t" style="left:217.27px;top:309.25px;font-size:5.73px;font-weight:normal;color:#000;font-family:'Liberation Sans',sans-serif;transform:scaleX(1.105);transform-origin:0 0;-webkit-text-stroke:0.07px #000;">Adiantamento de Salário</div>
<div class="t" style="left:389.15px;top:309.25px;font-size:5.73px;font-weight:normal;color:#000;font-family:'Liberation Sans',sans-serif;transform:scaleX(1.105);transform-origin:0 0;-webkit-text-stroke:0.07px #000;">1</div>
<div class="t" style="left:455.57px;top:309.25px;font-size:5.73px;font-weight:normal;color:#000;font-family:'Liberation Sans',sans-serif;transform:scaleX(1.105);transform-origin:0 0;-webkit-text-stroke:0.07px #000;">Processado</div>
<div class="a" style="left:131.3px;top:315.8px;width:544.7px;height:9.2px;background:#e6e6e6"></div>
<div class="t" style="left:161.65px;top:319.25px;font-size:5.73px;font-weight:normal;color:#000;font-family:'Liberation Sans',sans-serif;transform:scaleX(1.105);transform-origin:0 0;-webkit-text-stroke:0.07px #000;">201607</div>
<div class="t" style="left:217.02px;top:319.25px;font-size:5.73px;font-weight:normal;color:#000;font-family:'Liberation Sans',sans-serif;transform:scaleX(1.105);transform-origin:0 0;-webkit-text-stroke:0.07px #000;">Salário</div>
<div class="t" style="left:389.15px;top:319.25px;font-size:5.73px;font-weight:normal;color:#000;font-family:'Liberation Sans',sans-serif;transform:scaleX(1.105);transform-origin:0 0;-webkit-text-stroke:0.07px #000;">1</div>
<div class="t" style="left:455.57px;top:319.25px;font-size:5.73px;font-weight:normal;color:#000;font-family:'Liberation Sans',sans-serif;transform:scaleX(1.105);transform-origin:0 0;-webkit-text-stroke:0.07px #000;">Processado</div>
<div class="a" style="left:131.3px;top:325.8px;width:544.7px;height:9.2px;background:#e6e6e6"></div>
<div class="t" style="left:161.63px;top:329.25px;font-size:5.73px;font-weight:normal;color:#2020b8;font-family:'Liberation Sans',sans-serif;transform:scaleX(1.105);transform-origin:0 0;-webkit-text-stroke:0.07px #2020b8;">201606</div>
<div class="t" style="left:217.27px;top:329.25px;font-size:5.73px;font-weight:normal;color:#2020b8;font-family:'Liberation Sans',sans-serif;transform:scaleX(1.105);transform-origin:0 0;-webkit-text-stroke:0.07px #2020b8;">Adiantamento de Salário</div>
<div class="t" style="left:389.24px;top:329.25px;font-size:5.73px;font-weight:normal;color:#2020b8;font-family:'Liberation Sans',sans-serif;transform:scaleX(1.105);transform-origin:0 0;-webkit-text-stroke:0.07px #2020b8;">2</div>
<div class="t" style="left:458.01px;top:329.25px;font-size:5.73px;font-weight:normal;color:#2020b8;font-family:'Liberation Sans',sans-serif;transform:scaleX(1.105);transform-origin:0 0;-webkit-text-stroke:0.07px #2020b8;">Importado</div>
<div class="a" style="left:213.4px;top:125.8px;width:1px;height:209.2px;background:#f2f2f2"></div>
<div class="a" style="left:349.4px;top:125.8px;width:1px;height:209.2px;background:#f2f2f2"></div>
<div class="a" style="left:431.5px;top:125.8px;width:1px;height:209.2px;background:#f2f2f2"></div>
<div class="a" style="left:513.2px;top:125.8px;width:1px;height:209.2px;background:#f2f2f2"></div>

<div class="a" style="left:0;top:398px;width:709px;height:2px;background:#1e6fc2"></div>
<div class="a" style="left:0;top:400px;width:709px;height:1px;background:#e4eef8"></div>
<div class="a" style="left:0;top:401px;width:709px;height:21px;background:#e9e9e9"></div>
<div class="a" style="left:0;top:422px;width:709px;height:2px;background:#f4f4f4"></div>
<div class="a" style="left:0;top:424px;width:709px;height:1px;background:#8aa4bc"></div>
<div class="a" style="left:0;top:425px;width:709px;height:1px;background:#b8d8f2"></div>

<div class="t" style="left:71.60px;top:408.79px;font-size:7.68px;font-weight:normal;color:#1a1a1a;font-family:'Liberation Sans',sans-serif;transform:scaleX(0.984);transform-origin:0 0;-webkit-text-stroke:0.15px #1a1a1a;">MATRIZ - 76.676.436/0001-67</div>
<div class="t" style="left:248.39px;top:409.50px;font-size:5.31px;font-weight:normal;color:#111;font-family:'Liberation Sans',sans-serif;transform:scaleX(1.170);transform-origin:0 0;-webkit-text-stroke:0.15px #111;">Grupo:</div>

<div class="a" style="left:269.9px;top:408.7px;width:48.7px;height:7.2px;background:#fff;border:1px solid #7a7a7a;border-right-color:#d8d8d8;border-bottom-color:#d8d8d8"></div>
<div class="a" style="left:309.5px;top:409.6px;width:8.3px;height:5.6px;background:#f4f4f4;border-left:1px solid #b0b0b0"></div>
<svg style="left:311.5px;top:411px" width="5" height="3" viewBox="0 0 5 3"><path d="M0.6 0.5 L2.5 2.4 L4.4 0.5" stroke="#222" stroke-width="0.8" fill="none"/></svg>

<div class="t" style="left:272.00px;top:410.25px;font-size:4.19px;font-weight:normal;color:#111;font-family:'Liberation Sans',sans-serif;transform:scaleX(1.074);transform-origin:0 0;-webkit-text-stroke:0.12px #111;">Seja</div>
<div class="a" style="left:324px;top:401.7px;width:120.0px;height:20.8px;background:#ececec;border:1px solid #fafafa;border-right-color:#9a9a9a;border-bottom-color:#9a9a9a"></div>
<div class="a" style="left:325px;top:407.9px;width:118.0px;height:0.8px;background:#a8a8a8"></div>
<div class="a" style="left:325px;top:408.7px;width:118.0px;height:0.6px;background:#fafafa"></div>
<div class="a" style="left:325px;top:415.2px;width:118.0px;height:0.8px;background:#a8a8a8"></div>
<div class="a" style="left:325px;top:416px;width:118.0px;height:0.6px;background:#fafafa"></div>
<div class="t" style="left:368.06px;top:402.94px;font-size:5.03px;font-weight:bold;color:#111;font-family:'Liberation Sans',sans-serif;transform:scaleX(1.153);transform-origin:0 0;-webkit-text-stroke:0.12px #111;">Acumulado</div>
<div class="t" style="left:332.89px;top:410.12px;font-size:5.17px;font-weight:normal;color:#161616;font-family:'Liberation Sans',sans-serif;transform:scaleX(1.180);transform-origin:0 0;-webkit-text-stroke:0.12px #161616;">Entrada</div>
<div class="t" style="left:334.47px;top:416.72px;font-size:5.17px;font-weight:normal;color:#161616;font-family:'Liberation Sans',sans-serif;transform:scaleX(1.180);transform-origin:0 0;-webkit-text-stroke:0.12px #161616;">39.200</div>
<div class="a" style="left:363.6px;top:408px;width:0.8px;height:14.5px;background:#a8a8a8"></div>
<div class="a" style="left:364.4px;top:408px;width:0.6px;height:14.5px;background:#fafafa"></div>
<div class="t" style="left:375.31px;top:410.12px;font-size:5.17px;font-weight:normal;color:#161616;font-family:'Liberation Sans',sans-serif;transform:scaleX(1.180);transform-origin:0 0;-webkit-text-stroke:0.12px #161616;">Saída</div>
<div class="t" style="left:375.78px;top:416.72px;font-size:5.17px;font-weight:normal;color:#161616;font-family:'Liberation Sans',sans-serif;transform:scaleX(1.180);transform-origin:0 0;-webkit-text-stroke:0.12px #161616;">0.000</div>
<div class="a" style="left:403.2px;top:408px;width:0.8px;height:14.5px;background:#a8a8a8"></div>
<div class="a" style="left:404.0px;top:408px;width:0.6px;height:14.5px;background:#fafafa"></div>
<div class="t" style="left:415.79px;top:410.12px;font-size:5.17px;font-weight:normal;color:#161616;font-family:'Liberation Sans',sans-serif;transform:scaleX(1.180);transform-origin:0 0;-webkit-text-stroke:0.12px #161616;">Saldo</div>
<div class="t" style="left:408.36px;top:416.72px;font-size:5.17px;font-weight:normal;color:#161616;font-family:'Liberation Sans',sans-serif;transform:scaleX(1.180);transform-origin:0 0;-webkit-text-stroke:0.12px #161616;">37.965.409</div>
<div class="a" style="left:448px;top:401.7px;width:119.4px;height:20.8px;background:#ececec;border:1px solid #fafafa;border-right-color:#9a9a9a;border-bottom-color:#9a9a9a"></div>
<div class="a" style="left:449px;top:407.9px;width:117.4px;height:0.8px;background:#a8a8a8"></div>
<div class="a" style="left:449px;top:408.7px;width:117.4px;height:0.6px;background:#fafafa"></div>
<div class="a" style="left:449px;top:415.2px;width:117.4px;height:0.8px;background:#a8a8a8"></div>
<div class="a" style="left:449px;top:416px;width:117.4px;height:0.6px;background:#fafafa"></div>
<div class="t" style="left:498.31px;top:402.94px;font-size:5.03px;font-weight:bold;color:#111;font-family:'Liberation Sans',sans-serif;transform:scaleX(1.189);transform-origin:0 0;-webkit-text-stroke:0.12px #111;">Do Dia</div>
<div class="t" style="left:456.89px;top:410.12px;font-size:5.17px;font-weight:normal;color:#161616;font-family:'Liberation Sans',sans-serif;transform:scaleX(1.180);transform-origin:0 0;-webkit-text-stroke:0.12px #161616;">Entrada</div>
<div class="t" style="left:460.18px;top:416.72px;font-size:5.17px;font-weight:normal;color:#161616;font-family:'Liberation Sans',sans-serif;transform:scaleX(1.180);transform-origin:0 0;-webkit-text-stroke:0.12px #161616;">0.000</div>
<div class="a" style="left:487.6px;top:408px;width:0.8px;height:14.5px;background:#a8a8a8"></div>
<div class="a" style="left:488.4px;top:408px;width:0.6px;height:14.5px;background:#fafafa"></div>
<div class="t" style="left:499.46px;top:410.12px;font-size:5.17px;font-weight:normal;color:#161616;font-family:'Liberation Sans',sans-serif;transform:scaleX(1.180);transform-origin:0 0;-webkit-text-stroke:0.12px #161616;">Saída</div>
<div class="t" style="left:499.93px;top:416.72px;font-size:5.17px;font-weight:normal;color:#161616;font-family:'Liberation Sans',sans-serif;transform:scaleX(1.180);transform-origin:0 0;-webkit-text-stroke:0.12px #161616;">0.000</div>
<div class="a" style="left:527.5px;top:408px;width:0.8px;height:14.5px;background:#a8a8a8"></div>
<div class="a" style="left:528.3px;top:408px;width:0.6px;height:14.5px;background:#fafafa"></div>
<div class="t" style="left:539.64px;top:410.12px;font-size:5.17px;font-weight:normal;color:#161616;font-family:'Liberation Sans',sans-serif;transform:scaleX(1.180);transform-origin:0 0;-webkit-text-stroke:0.12px #161616;">Saldo</div>
<div class="t" style="left:539.83px;top:416.72px;font-size:5.17px;font-weight:normal;color:#161616;font-family:'Liberation Sans',sans-serif;transform:scaleX(1.180);transform-origin:0 0;-webkit-text-stroke:0.12px #161616;">0.000</div>
</body></html>
